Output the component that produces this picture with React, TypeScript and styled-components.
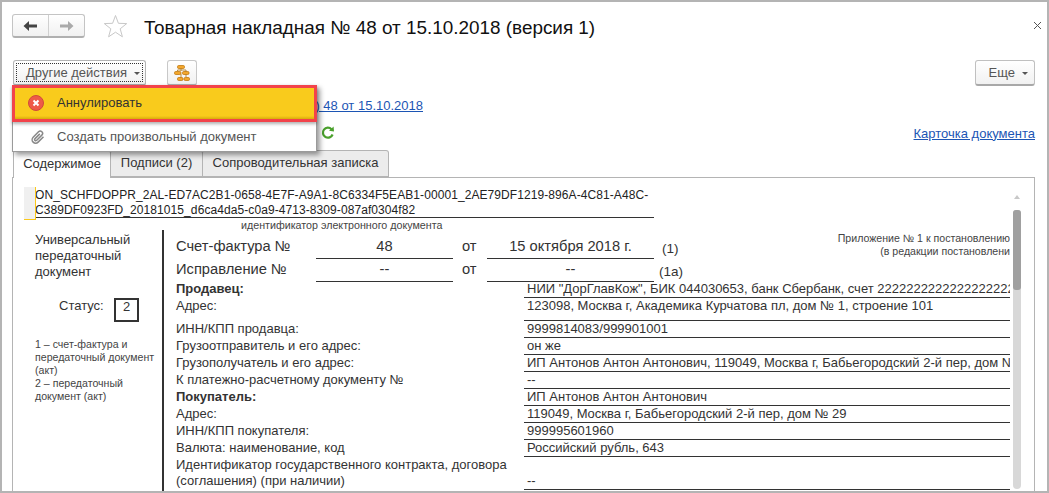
import React from "react";
import styled, { createGlobalStyle } from "styled-components";

const Global = createGlobalStyle`
  html, body { margin: 0; padding: 0; background: #fff; }
  body { font-family: "Liberation Sans", Arial, sans-serif; font-size: 13px; color: #333; }
  * { box-sizing: border-box; }
`;

const Win = styled.div`
  position: relative;
  width: 1049px;
  height: 493px;
  border: 2px solid #b4b4b4;
  background: #fff;
  overflow: hidden;
  display: flex;
  flex-direction: column;
`;
const Header = styled.div`
  display: flex;
  align-items: center;
  height: 24px;
  margin-top: 12px;
  padding-left: 10px;
`;
const NavGroup = styled.div`
  display: flex;
  width: 73px;
  height: 24px;
  border: 1px solid #c4c4c4;
  border-bottom: 2px solid #b0b0b0;
  border-radius: 3px;
  background: linear-gradient(#fff, #f1f1f1);
`;
const NavBtn = styled.div<{ $sep?: boolean }>`
  flex: 1;
  display: flex;
  align-items: center;
  justify-content: center;
  border-left: ${(p) => (p.$sep ? "1px solid #d0d0d0" : "none")};
`;
const StarWrap = styled.div`
  margin-left: 18px;
  width: 25px;
  height: 24px;
`;
const Title = styled.h1`
  margin: 0 0 0 16px;
  padding-top: 4px;
  font-size: 18.9px;
  font-weight: 400;
  color: #111;
  white-space: nowrap;
`;
const Close = styled.div`
  margin-left: auto;
  margin-right: 5px;
  margin-bottom: 8px;
  width: 9px;
  height: 9px;
`;
const Toolbar = styled.div`
  position: relative;
  display: flex;
  align-items: flex-start;
  height: 26px;
  margin-top: 22px;
  padding: 0 12px 0 11px;
`;
const ActionBtn = styled.div`
  width: 133px;
  height: 26px;
  padding: 2px;
  border: 1px solid #b4b4b4;
  border-bottom: 2px solid #a8a8a8;
  border-radius: 3px;
  background: linear-gradient(#fff, #f1f1f1);
`;
const Focus = styled.div`
  height: 100%;
  border: 1px dotted #333;
  display: flex;
  align-items: center;
  padding-left: 9px;
  color: #555;
  white-space: nowrap;
`;
const Caret = styled.span`
  display: inline-block;
  margin-left: 7px;
  margin-top: 2px;
  border-left: 3px solid transparent;
  border-right: 3px solid transparent;
  border-top: 3px solid #555;
`;
const IconBtn = styled.div`
  margin-left: 21px;
  width: 30px;
  height: 26px;
  border: 1px solid #c8c8c8;
  border-bottom: 2px solid #b0b0b0;
  border-radius: 3px;
  background: linear-gradient(#fff, #f1f1f1);
  display: flex;
  align-items: center;
  justify-content: center;
`;
const MoreBtn = styled.div`
  margin-left: auto;
  width: 60px;
  height: 26px;
  border: 1px solid #c0c0c0;
  border-bottom: 2px solid #a8a8a8;
  border-radius: 3px;
  background: linear-gradient(#fff, #f1f1f1);
  display: flex;
  align-items: center;
  justify-content: flex-end;
  padding-right: 6px;
  color: #555;
`;
const Menu = styled.div`
  position: absolute;
  left: 10px;
  top: 25px;
  width: 305px;
  height: 67px;
  z-index: 5;
  background: #fff;
  border: 1px solid #9a9a9a;
  box-shadow: 3px 3px 5px rgba(0, 0, 0, 0.4);
  display: flex;
  flex-direction: column;
`;
const MenuHot = styled.div`
  margin: -1px -1px 0;
  height: 37px;
  border: 3px solid #f2434b;
  background: linear-gradient(#f9cb1c 90%, #d8ab0a);
  display: flex;
  align-items: center;
  gap: 12px;
  padding: 0 0 2px 13px;
  color: #333;
  box-shadow: 0 2px 3px rgba(0, 0, 0, 0.3);
`;
const MenuItem = styled.div`
  flex: 1;
  display: flex;
  align-items: center;
  gap: 12px;
  padding-left: 18px;
  color: #555;
`;
const LinkRow = styled.div`
  width: 421px;
  margin-top: 12px;
  height: 16px;
  line-height: 16px;
  text-align: right;
  white-space: nowrap;
`;
const DocLink = styled.a`
  color: #1c55b4;
  text-decoration: underline;
`;
const CmdRow = styled.div`
  display: flex;
  align-items: center;
  height: 16px;
  margin-top: 11px;
  padding: 0 12px 0 319px;
`;
const CardLink = styled(DocLink)`
  margin-left: auto;
`;
const Tabs = styled.div`
  display: flex;
  height: 27px;
  margin-top: 9px;
  padding-left: 11px;
  position: relative;
  z-index: 1;
`;
const Tab = styled.div<{ $active?: boolean; $w: number }>`
  width: ${(p) => p.$w}px;
  height: ${(p) => (p.$active ? 28 : 27)}px;
  border: 1px solid #b4b4b4;
  border-left-width: ${(p) => (p.$active ? 1 : 0)}px;
  border-bottom: ${(p) => (p.$active ? "none" : "1px solid #b4b4b4")};
  border-radius: 3px 3px 0 0;
  background: ${(p) => (p.$active ? "#fff" : "#ececec")};
  color: #333;
  display: flex;
  align-items: center;
  justify-content: center;
  padding-bottom: 2px;
`;
const Panel = styled.div`
  flex: 1;
  min-height: 0;
  margin: 0 12px 0 10px;
  border: 1px solid #b4b4b4;
  border-bottom: none;
  display: flex;
  overflow: hidden;
`;
const Doc = styled.div`
  position: relative;
  width: 997px;
  padding: 9px 0 0 22px;
  overflow: hidden;
`;
const Cursor = styled.div`
  position: absolute;
  left: 11px;
  top: 9px;
  width: 12px;
  height: 33px;
  background: #f0f0f0;
  border-right: 1px solid #fbc91a;
  border-bottom: 1px solid #fbc91a;
`;
const IdBlock = styled.div`
  width: 619px;
  padding-top: 1px;
  font-size: 12px;
  letter-spacing: 0.08px;
  line-height: 14.5px;
  color: #222;
  border-bottom: 1px solid #333;
  white-space: nowrap;
`;
const IdCaption = styled.div`
  width: 619px;
  font-size: 10.7px;
  line-height: 12px;
  margin-top: 1px;
  padding-left: 206px;
  color: #444;
  white-space: nowrap;
`;
const Form = styled.div`
  display: flex;
  margin-top: -1px;
  height: 270px;
`;
const LeftCol = styled.div`
  width: 129px;
  flex: none;
  padding-top: 1px;
  border-right: 2px solid #333;
`;
const DocTitle = styled.div`
  line-height: 16px;
  margin-top: 1px;
`;
const Status = styled.div`
  display: flex;
  align-items: flex-start;
  margin-top: 18px;
  padding-left: 24px;
`;
const StatusLabel = styled.span`
  width: 55px;
`;
const StatusBox = styled.div`
  width: 25px;
  height: 24px;
  border: 2px solid #333;
  text-align: center;
  line-height: 14px;
`;
const Notes = styled.div`
  margin-top: 16px;
  font-size: 10.6px;
  line-height: 13px;
  color: #444;
  white-space: nowrap;
`;
const RightCol = styled.div`
  flex: 1;
  min-width: 0;
  padding-left: 12px;
`;
const Top = styled.div`
  position: relative;
  padding-top: 5px;
`;
const Inv = styled.div`
  display: grid;
  grid-template-columns: 140px 137px 34px 167px 40px;
  height: 23px;
  font-size: 14.7px;
  line-height: 20px;
  white-space: nowrap;
`;
const InvLabel = styled.div`
  padding-top: 1px;
  color: #333;
`;
const InvValue = styled.div`
  border-bottom: 1px solid #333;
  text-align: center;
  padding-top: 1px;
`;
const InvOt = styled.div`
  padding: 1px 0 0 9px;
`;
const InvNote = styled.div<{ $pad: number }>`
  font-size: 13.5px;
  padding: 4px 0 0 ${(p) => p.$pad}px;
`;
const Annex = styled.div`
  position: absolute;
  top: 2px;
  right: 0;
  font-size: 10.6px;
  line-height: 13px;
  text-align: right;
  color: #444;
  white-space: nowrap;
`;
const Row = styled.div<{ $h?: number }>`
  display: grid;
  grid-template-columns: 348px 486px;
  height: ${(p) => p.$h ?? 17}px;
  line-height: 16px;
`;
const Label = styled.div<{ $bold?: boolean }>`
  font-weight: ${(p) => (p.$bold ? 700 : 400)};
  white-space: nowrap;
`;
const Value = styled.div`
  border-bottom: 1px solid #333;
  padding-left: 3px;
  white-space: nowrap;
  overflow: hidden;
  display: flex;
  align-items: flex-start;
`;
const ValueLow = styled(Value)`
  align-items: flex-end;
`;
const Scroll = styled.div`
  width: 8px;
  margin-left: 3px;
  padding-top: 17px;
  display: flex;
  flex-direction: column;
  align-items: center;
`;
const ScrollUp = styled.div`
  border-left: 3px solid transparent;
  border-right: 3px solid transparent;
  border-bottom: 4px solid #c8c8c8;
  margin-bottom: 11px;
`;
const Track = styled.div`
  flex: 1;
  width: 8px;
  background: #d8d8d8;
  border-radius: 3px 3px 4px 4px;
  margin-bottom: 2px;
`;
const Thumb = styled.div`
  height: 80px;
  background: #a0a0a0;
  border-radius: 3px;
`;

const rows: { l: string; v: string; bold?: boolean; h?: number }[] = [
  { l: "Продавец:", bold: true, v: 'НИИ "ДорГлавКож", БИК 044030653, банк Сбербанк, счет 22222222222222222222' },
  { l: "Адрес:", h: 23, v: "123098, Москва г, Академика Курчатова пл, дом № 1, строение 101" },
  { l: "ИНН/КПП продавца:", v: "9999814083/999901001" },
  { l: "Грузоотправитель и его адрес:", v: "он же" },
  { l: "Грузополучатель и его адрес:", v: "ИП Антонов Антон Антонович, 119049, Москва г, Бабьегородский 2-й пер, дом № 29" },
  { l: "К платежно-расчетному документу №", v: "--" },
  { l: "Покупатель:", bold: true, v: "ИП Антонов Антон Антонович" },
  { l: "Адрес:", v: "119049, Москва г, Бабьегородский 2-й пер, дом № 29" },
  { l: "ИНН/КПП покупателя:", v: "999995601960" },
  { l: "Валюта: наименование, код", v: "Российский рубль, 643" },
];

export default function App() {
  return (
    <>
      <Global />
      <Win>
        <Header>
          <NavGroup>
            <NavBtn>
              <svg width="15" height="12" viewBox="0 0 15 12"><path d="M0.5 6 L6 1 V4.5 H14 V7.5 H6 V11 Z" fill="#444" /></svg>
            </NavBtn>
            <NavBtn $sep>
              <svg width="15" height="12" viewBox="0 0 15 12"><path d="M14.5 6 L9 1 V4.5 H1 V7.5 H9 V11 Z" fill="#aaa" /></svg>
            </NavBtn>
          </NavGroup>
          <StarWrap>
            <svg width="25" height="24" viewBox="0 0 25 24"><path d="M12.5 1.5 L15.4 9.3 L23.7 9.6 L17.2 14.8 L19.4 22.8 L12.5 18.2 L5.6 22.8 L7.8 14.8 L1.3 9.6 L9.6 9.3 Z" fill="#fff" stroke="#c8c8c8" strokeWidth="1" /></svg>
          </StarWrap>
          <Title>Товарная накладная № 48 от 15.10.2018 (версия 1)</Title>
          <Close>
            <svg width="9" height="9" viewBox="0 0 9 9"><path d="M1 1 L8 8 M8 1 L1 8" stroke="#555" strokeWidth="1" fill="none" /></svg>
          </Close>
        </Header>
        <Toolbar>
          <ActionBtn>
            <Focus>
              Другие действия
              <Caret />
            </Focus>
          </ActionBtn>
          <IconBtn>
            <svg width="16" height="16" viewBox="0 0 16 16">
              <path d="M7 3 V6 M3.5 6 V5 H12 V12 M7 9 V13" stroke="#b98a3a" fill="none" />
              <rect x="3.5" y="0.5" width="7" height="3" rx="1.2" fill="#f3a72c" stroke="#c07810" strokeWidth="0.8" />
              <rect x="0.5" y="6.5" width="6.5" height="3" rx="1.2" fill="#f3a72c" stroke="#c07810" strokeWidth="0.8" />
              <rect x="8.5" y="6.5" width="6.5" height="3" rx="1.2" fill="#f3a72c" stroke="#c07810" strokeWidth="0.8" />
              <rect x="3.5" y="12.5" width="5.5" height="3" rx="1.2" fill="#f3a72c" stroke="#c07810" strokeWidth="0.8" />
              <rect x="10" y="12.5" width="5.5" height="3" rx="1.2" fill="#f3a72c" stroke="#c07810" strokeWidth="0.8" />
            </svg>
          </IconBtn>
          <MoreBtn>
            Еще
            <Caret />
          </MoreBtn>
          <Menu>
            <MenuHot>
              <svg width="17" height="16" viewBox="0 0 17 16">
                <circle cx="8" cy="8" r="7.5" fill="#ee5a48" stroke="#d04a3c" />
                <path d="M5.5 5.5 L10.5 10.5 M10.5 5.5 L5.5 10.5" stroke="#fff" strokeWidth="2" />
              </svg>
              Аннулировать
            </MenuHot>
            <MenuItem>
              <svg width="14" height="14" viewBox="0 0 24 24" fill="none" stroke="#888" strokeWidth="2.6">
                <path d="M21.4 11.6 12.2 20.8a6 6 0 0 1-8.5-8.5l9.2-9.2a4 4 0 0 1 5.7 5.7l-9.2 9.2a2 2 0 0 1-2.8-2.8l8.5-8.5" />
              </svg>
              Создать произвольный документ
            </MenuItem>
          </Menu>
        </Toolbar>
        <LinkRow>
          <DocLink>Реализация (акт, накладная) 48 от 15.10.2018</DocLink>
        </LinkRow>
        <CmdRow>
          <svg width="14" height="14" viewBox="0 0 14 14" fill="none">
            <path d="M11.6 8.5 A5 5 0 1 1 10.5 3.2" stroke="#4aa02c" strokeWidth="2.2" />
            <path d="M8 4.8 L13 5.6 L12.6 0.6 Z" fill="#4aa02c" />
          </svg>
          <CardLink>Карточка документа</CardLink>
        </CmdRow>
        <Tabs>
          <Tab $active $w={98}>Содержимое</Tab>
          <Tab $w={92}>Подписи (2)</Tab>
          <Tab $w={186}>Сопроводительная записка</Tab>
        </Tabs>
        <Panel>
          <Doc>
            <Cursor />
            <IdBlock>
              ON_SCHFDOPPR_2AL-ED7AC2B1-0658-4E7F-A9A1-8C6334F5EAB1-00001_2AE79DF1219-896A-4C81-A48C-
              <br />
              C389DF0923FD_20181015_d6ca4da5-c0a9-4713-8309-087af0304f82
            </IdBlock>
            <IdCaption>идентификатор электронного документа</IdCaption>
            <Form>
              <LeftCol>
                <DocTitle>
                  Универсальный
                  <br />
                  передаточный
                  <br />
                  документ
                </DocTitle>
                <Status>
                  <StatusLabel>Статус:</StatusLabel>
                  <StatusBox>2</StatusBox>
                </Status>
                <Notes>
                  1 – счет-фактура и
                  <br />
                  передаточный документ
                  <br />
                  (акт)
                  <br />
                  2 – передаточный
                  <br />
                  документ (акт)
                </Notes>
              </LeftCol>
              <RightCol>
                <Top>
                  <Annex>
                    Приложение № 1 к постановлению
                    <br />
                    (в редакции постановлени
                  </Annex>
                  <Inv>
                    <InvLabel>Счет-фактура №</InvLabel>
                    <InvValue>48</InvValue>
                    <InvOt>от</InvOt>
                    <InvValue>15 октября 2018 г.</InvValue>
                    <InvNote $pad={8}>(1)</InvNote>
                  </Inv>
                  <Inv>
                    <InvLabel>Исправление №</InvLabel>
                    <InvValue>--</InvValue>
                    <InvOt>от</InvOt>
                    <InvValue>--</InvValue>
                    <InvNote $pad={5}>(1а)</InvNote>
                  </Inv>
                </Top>
                {rows.map((r) => (
                  <Row key={r.l + r.v} $h={r.h}>
                    <Label $bold={r.bold}>{r.l}</Label>
                    <Value>{r.v}</Value>
                  </Row>
                ))}
                <Row $h={33}>
                  <Label>
                    Идентификатор государственного контракта, договора
                    <br />
                    (соглашения) (при наличии)
                  </Label>
                  <ValueLow>--</ValueLow>
                </Row>
              </RightCol>
            </Form>
          </Doc>
          <Scroll>
            <ScrollUp />
            <Track>
              <Thumb />
            </Track>
          </Scroll>
        </Panel>
      </Win>
    </>
  );
}
